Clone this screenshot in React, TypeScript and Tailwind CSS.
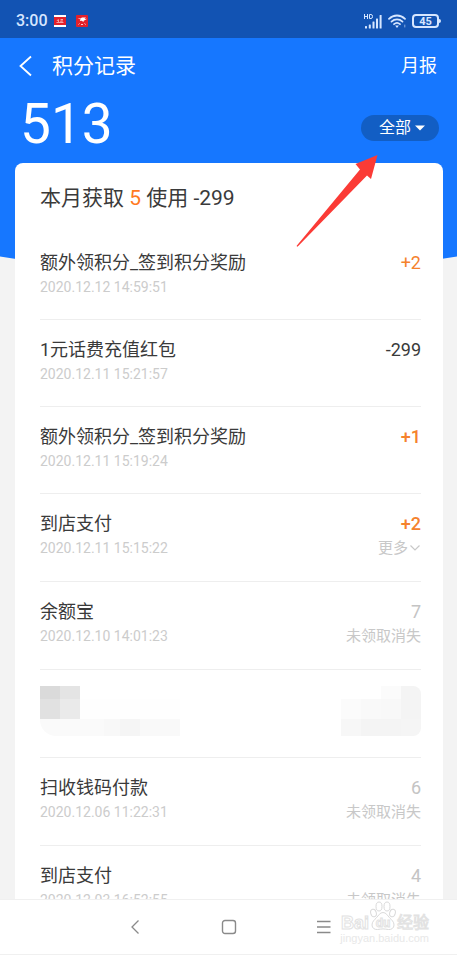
import clsx from 'clsx';

type PointRecord = {
  id: number;
  title?: string;
  time?: string;
  amount?: string;
  tone?: 'gain' | 'spent' | 'expired';
  bold?: boolean;
  note?: string;
  expandable?: boolean;
  masked?: boolean;
};

const records: PointRecord[] = [
  { id: 1, title: '额外领积分_签到积分奖励', time: '2020.12.12 14:59:51', amount: '+2', tone: 'gain' },
  { id: 2, title: '1元话费充值红包', time: '2020.12.11 15:21:57', amount: '-299', tone: 'spent' },
  { id: 3, title: '额外领积分_签到积分奖励', time: '2020.12.11 15:19:24', amount: '+1', tone: 'gain', bold: true },
  { id: 4, title: '到店支付', time: '2020.12.11 15:15:22', amount: '+2', tone: 'gain', bold: true, note: '更多', expandable: true },
  { id: 5, title: '余额宝', time: '2020.12.10 14:01:23', amount: '7', tone: 'expired', note: '未领取消失' },
  { id: 6, masked: true },
  { id: 7, title: '扫收钱码付款', time: '2020.12.06 11:22:31', amount: '6', tone: 'expired', note: '未领取消失' },
  { id: 8, title: '到店支付', time: '2020.12.03 16:52:55', amount: '4', tone: 'expired', note: '未领取消失' },
];

function StatusBar() {
  return (
    <div className="flex h-[38px] items-center justify-between bg-[#1253b3] px-4 pt-1 text-[#d6e6ff]">
      <div className="flex items-center">
        <span className="text-base font-medium">3:00</span>
        <svg viewBox="0 0 12 12" className="ml-[6px] size-3">
          <rect width="12" height="12" fill="#fff" />
          <rect y="2" width="12" height="8" fill="#e3202b" />
          <path d="M2.5 7.5h7M3 6l1-1.5M4.5 7V4.5M6 6.2h1.5M6.5 4.5h2.5M8 4.5V7.5" stroke="#ffd2d2" strokeWidth="0.7" fill="none" />
        </svg>
        <svg viewBox="0 0 12 12" className="ml-[10px] size-3">
          <rect width="12" height="12" rx="1" fill="#e3202b" />
          <path d="M1.5 3.2l3 .4 1.500-1h4l-1.500 1.400 2.700-.2-3.400 1.900-.5 1.300-1.500-1.300-2 .3.800-1.500z" fill="#fff" />
          <path d="M2.5 9.5l1-1M5 9.5h2M8.5 8.500l1.200 1" stroke="#fff" strokeWidth="0.8" />
        </svg>
      </div>
      <div className="flex items-center gap-[6px]">
        <svg viewBox="0 0 18 15" className="h-[15px] w-[18px]" fill="currentColor">
          <path d="M.5 0v5M3.500 0v5M.5 2.500h3M5.500.5v4h1.500q1.500 0 1.500-2t-1.500-2z" fill="none" stroke="currentColor" strokeWidth="1" />
          <rect x="1" y="12" width="2" height="2.500" rx=".5" />
          <rect x="4.800" y="10.500" width="2" height="4" rx=".5" />
          <rect x="8.500" y="7.500" width="2" height="7" rx=".5" />
          <rect x="12" y="4.500" width="2" height="10" rx=".5" />
          <rect x="15.600" y="1" width="2" height="13.500" rx=".5" />
        </svg>
        <svg viewBox="0 0 18 14" className="h-[14px] w-[18px]" fill="none" stroke="currentColor" strokeWidth="1.800" strokeLinecap="round">
          <path d="M1 4.800c4.600-4.400 11.400-4.400 16 0" />
          <path d="M3.500 7.600c3.200-3 7.800-3 11 0" />
          <path d="M6 10.200c1.800-1.600 4.200-1.600 6 0" />
          <path d="M8.300 12h1.400l-.7 1z" fill="currentColor" strokeWidth="1.200" />
          <path d="M16.800 11v2" strokeWidth="1" opacity=".6" />
        </svg>
        <div className="flex items-center">
          <span className="flex h-[14px] w-[27px] items-center justify-center rounded-[4px] border-2 border-current text-[11px] leading-none font-bold">
            45
          </span>
          <span className="h-1 w-[2px] rounded-r bg-current" />
        </div>
      </div>
    </div>
  );
}

function Header() {
  return (
    <header className="bg-[#1677ff] pb-[92px] text-white">
      <div className="flex h-14 items-center pr-5 pl-[18px]">
        <button type="button" aria-label="返回" className="flex size-4 items-center">
          <svg viewBox="0 0 16 22" className="h-[22px] w-4 shrink-0" fill="none" stroke="currentColor" strokeWidth="1.800">
            <path d="M13 1.500L2.500 11L13 20.500" />
          </svg>
        </button>
        <h1 className="ml-[18px] text-[21px] leading-7">积分记录</h1>
        <a href="#report" className="ml-auto text-lg leading-7">月报</a>
      </div>
      <div className="flex h-[69px] items-start justify-between pr-[18px] pl-5">
        <p className="text-[55px] leading-[60px]">513</p>
        <button type="button" className="mt-[21px] flex h-[26px] w-[78px] items-center justify-center gap-1 rounded-full bg-[#125ec4] pl-1 text-base leading-none">
          全部
          <svg viewBox="0 0 10 6" className="h-[6px] w-[10px]" fill="currentColor">
            <path d="M0 .5h10L5 5.500z" />
          </svg>
        </button>
      </div>
    </header>
  );
}

// Blurred-out entry, drawn as mosaic tiles
function MaskedRecord() {
  return (
    <li className="flex h-[88px] justify-between border-b border-[#eeeeee] pt-4">
      <div>
        <div className="flex h-[13px]">
          <span className="w-5 bg-[#dadada]" />
          <span className="w-5 bg-[#e4e4e4]" />
        </div>
        <div className="flex h-5">
          <span className="w-5 bg-[#e1e1e1]" />
          <span className="w-5 bg-[#eaeaea]" />
          <span className="w-[100px] bg-[#fefefe]" />
        </div>
        <div className="flex h-[17px] overflow-hidden rounded-bl-2xl">
          <span className="w-16 bg-[#fafafa]" />
          <span className="w-4 bg-[#f8f8f8]" />
          <span className="w-5 bg-[#f5f5f5]" />
          <span className="w-10 bg-[#f9f9f9]" />
        </div>
      </div>
      <div className="h-[50px] overflow-hidden rounded-r-lg">
        <div className="flex h-[13px] justify-end">
          <span className="w-5 bg-[#fbfbfb]" />
          <span className="w-5 bg-[#f4f4f4]" />
        </div>
        <div className="flex h-5">
          <span className="w-5 bg-[#fbfbfb]" />
          <span className="w-5 bg-[#f9f9f9]" />
          <span className="w-5 bg-[#f8f8f8]" />
          <span className="w-5 bg-[#f4f4f4]" />
        </div>
        <div className="flex h-[17px]">
          <span className="w-5 bg-[#f7f7f7]" />
          <span className="w-10 bg-[#f4f4f4]" />
          <span className="w-5 bg-[#f5f5f5]" />
        </div>
      </div>
    </li>
  );
}

function RecordItem({ record }: { record: PointRecord }) {
  return (
    <li className={clsx('flex justify-between border-b border-[#eeeeee] pt-4', record.note ? 'h-[88px]' : 'h-[87px]')}>
      <div>
        <h2 className="text-lg leading-7 text-[#3a3a3a]">{record.title}</h2>
        <time className="block text-sm leading-5 text-[#cccccc]">{record.time}</time>
      </div>
      <div className="text-right">
        <p
          className={clsx(
            'text-lg leading-7',
            record.tone === 'gain' && 'text-[#f5822d]',
            record.tone === 'spent' && 'text-[#3a3a3a]',
            record.tone === 'expired' && 'text-[#c4c4c4]',
            record.bold && 'font-medium'
          )}
        >
          {record.amount}
        </p>
        {record.expandable ? (
          <button type="button" className="flex items-center gap-px text-[15px] leading-5 text-[#c8c8c8]">
            {record.note}
            <svg viewBox="0 0 12 8" className="h-2 w-3" fill="none" stroke="currentColor" strokeWidth="1.200">
              <path d="M1.500 1.500L6 6l4.500-4.500" />
            </svg>
          </button>
        ) : (
          <p className="text-[15px] leading-5 text-[#c8c8c8]">{record.note}</p>
        )}
      </div>
    </li>
  );
}

function Watermark() {
  return (
    <div className="pointer-events-none absolute right-7 bottom-[9px] font-['Liberation_Sans','Noto_Sans_CJK_SC',sans-serif] text-white">
      <div className="flex h-[30px] items-end justify-end text-lg leading-4 font-bold [-webkit-text-stroke:1px_#e2e2e2]">
        <span>Bai</span>
        <span className="relative flex w-7 justify-center">
          <svg viewBox="0 0 28 30" className="absolute bottom-0 left-0 h-[30px] w-7" fill="#fff" stroke="#dadada" strokeWidth="1">
            <ellipse cx="4.500" cy="12" rx="2.800" ry="3.800" transform="rotate(-15 4.500 12)" />
            <ellipse cx="10" cy="5.500" rx="3" ry="4.500" />
            <ellipse cx="18" cy="5.500" rx="3" ry="4.500" />
            <ellipse cx="23.500" cy="12" rx="2.800" ry="3.800" transform="rotate(15 23.500 12)" />
            <path d="M14 11.500c-3 0-4.500 3-6.500 5.200-2 2-4.500 4-4.500 7.300 0 3 2.500 4.800 5.500 4.500 2-.2 3.500-.6 5.500-.6s3.500.4 5.500.6c3 .3 5.500-1.500 5.500-4.500 0-3.300-2.500-5.300-4.500-7.300-2-2.200-3.500-5.200-6.500-5.200z" />
          </svg>
          <span className="relative text-xs leading-4">du</span>
        </span>
        <span className="text-base leading-4 font-normal">经验</span>
      </div>
      <p className="text-[11px] leading-[14px] text-[#e8e8e8]">jingyan.baidu.com</p>
    </div>
  );
}

function SystemNav() {
  return (
    <nav className="relative z-10 flex h-14 shrink-0 items-center justify-center gap-[78px] border-y border-[#f0f0f0] bg-white text-[#8a8a8a]">
      <button type="button" aria-label="返回">
        <svg viewBox="0 0 16 16" className="size-4" fill="none" stroke="currentColor" strokeWidth="1.300">
          <path d="M11.500 1.500L5 8l6.500 6.500" />
        </svg>
      </button>
      <button type="button" aria-label="主页">
        <svg viewBox="0 0 16 16" className="size-4" fill="none" stroke="currentColor" strokeWidth="1.400">
          <rect x="1.500" y="1.500" width="13" height="13" rx="2.500" />
        </svg>
      </button>
      <button type="button" aria-label="菜单">
        <svg viewBox="0 0 16 16" className="size-4" fill="none" stroke="currentColor" strokeWidth="1.400">
          <path d="M2 2.500h13.500M2 8h13.500M2 13.500h13.500" />
        </svg>
      </button>
      <Watermark />
    </nav>
  );
}

export default function App() {
  return (
    <div className="relative flex h-screen flex-col overflow-hidden bg-[#f3f3f3] font-['Roboto','Noto_Sans_CJK_SC',sans-serif]">
      <StatusBar />
      <main className="min-h-0 flex-1 overflow-hidden">
        <Header />
        <svg viewBox="0 0 457 12" preserveAspectRatio="none" className="block h-3 w-full" fill="#1677ff">
          <path d="M0 0v1.500Q228 40 457 1.500V0z" />
        </svg>
        <section className="relative mr-[14px] ml-[15px] -mt-[104px] rounded-t-lg bg-white pr-[22px] pl-[25px]">
          <p className="py-5 text-[21px] leading-[30px] text-[#3a3a3a]">
            本月获取 <span className="text-[#ff7a1f]">5</span> 使用 -299
          </p>
          <ul>
            {records.map((record) =>
              record.masked ? <MaskedRecord key={record.id} /> : <RecordItem key={record.id} record={record} />
            )}
          </ul>
        </section>
      </main>
      <SystemNav />

      <svg viewBox="0 0 82 92" className="pointer-events-none absolute top-[155px] right-[79px] h-[92px] w-[82px]" fill="#fb3b36">
        <path d="M81.500 0L59.500 9l4.500 5.500L.5 91l1 .7L71 20.500l4 3.500z" />
      </svg>
    </div>
  );
}
